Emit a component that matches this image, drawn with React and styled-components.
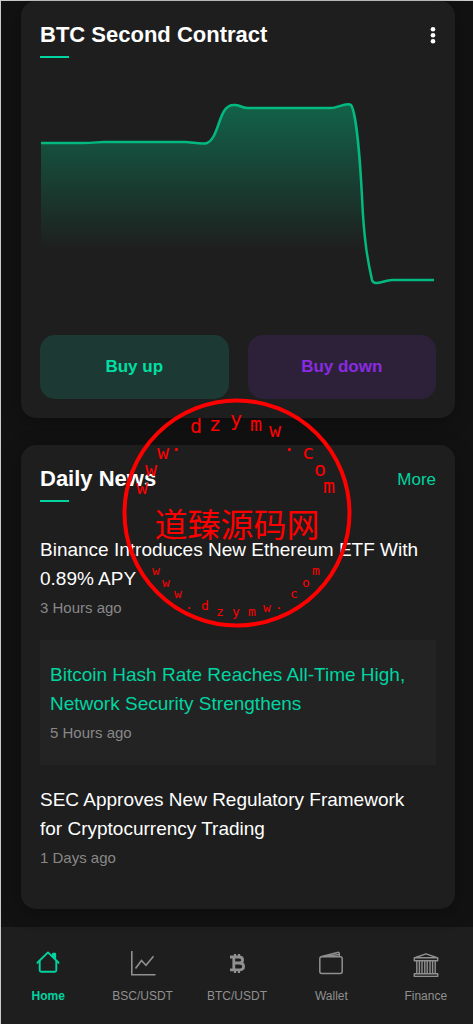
import React from "react";
import styled, { createGlobalStyle } from "styled-components";

const news = [
    { title: "Binance Introduces New Ethereum ETF With 0.89% APY", time: "3 Hours ago" },
    { title: "Bitcoin Hash Rate Reaches All-Time High, Network Security Strengthens", time: "5 Hours ago", active: true },
    { title: "SEC Approves New Regulatory Framework for Cryptocurrency Trading", time: "1 Days ago" },
];

const menu = [
    { label: "Home", icon: <HomeIcon />, active: true },
    { label: "BSC/USDT", icon: <GraphIcon /> },
    { label: "BTC/USDT", icon: <BitcoinIcon /> },
    { label: "Wallet", icon: <WalletIcon /> },
    { label: "Finance", icon: <BankIcon /> },
];

// [letter, x, y]
const topLetters = [
    ["w", 20, 96], ["w", 29, 78], ["w", 41, 61], [".", 54, 53], ["d", 74, 35], ["z", 93, 33], ["y", 114, 28],
    ["m", 134, 33], ["w", 153, 39], [".", 167, 53], ["c", 186, 61], ["o", 198, 78], ["m", 207, 95],
];
const bottomLetters = [
    ["w", 34, 177], ["w", 44, 189], ["w", 56, 200], [".", 67, 211], ["d", 83, 212], ["z", 98, 218], ["y", 114, 218],
    ["m", 130, 218], ["w", 145, 214], [".", 157, 211], ["c", 172, 200], ["o", 184, 189], ["m", 194, 177],
];

function DotsIcon() {
    return (
        <svg width="6" height="18" viewBox="0 0 6 18" fill="currentColor">
            <circle cx="3" cy="3.3" r="2.3" />
            <circle cx="3" cy="9.3" r="2.3" />
            <circle cx="3" cy="15.3" r="2.3" />
        </svg>
    );
}

function HomeIcon() {
    return (
        <svg viewBox="0 0 24 24" fill="none" stroke="currentColor" strokeWidth="1.9" strokeLinecap="round" strokeLinejoin="round">
            <path d="M1.4 11.8 L12 1.4 L22.6 11.8" />
            <path d="M3.7 10.5 V19.3 Q3.7 20.8 5.2 20.8 H18.8 Q20.3 20.8 20.3 19.3 V10.5" />
            <path d="M17 2.8 H19.2 V7.5 L17 5.5 Z" fill="currentColor" />
        </svg>
    );
}

function GraphIcon() {
    return (
        <svg viewBox="0 0 24 24" fill="none" stroke="currentColor" strokeWidth="1.6">
            <path d="M0.8 0 V24 M0 23.7 H24.5" />
            <path d="M4.5 17.5 L10.5 9.5 L15 14.2 L22.5 5.2" />
        </svg>
    );
}

function BitcoinIcon() {
    return (
        <svg viewBox="0 0 24 24" fill="none" stroke="currentColor" strokeWidth="2.8">
            <path d="M5 6 H14 Q17.6 6 17.6 8.9 Q17.6 12 14 12 H8 M14 12 Q18.6 12 18.6 15.4 Q18.6 18.8 14 18.8 H5 M8.8 6 V18.8" />
            <path d="M10 3 V6 M14 3 V6 M10 18.5 V22 M14 18.5 V22" strokeWidth="2.2" />
        </svg>
    );
}

function WalletIcon() {
    return (
        <svg viewBox="0 0 24 24" fill="none" stroke="currentColor" strokeWidth="1.5" strokeLinejoin="round">
            <rect x="0.8" y="5.8" width="22.4" height="16.7" rx="2" />
            <path d="M1.8 5.8 L18.5 1.4 Q20.3 1 20.3 2.8 V5.8" />
            <path d="M5 5.6 L20 3.4" />
        </svg>
    );
}

function BankIcon() {
    return (
        <svg viewBox="0 0 24 24" fill="none" stroke="currentColor" strokeWidth="1.4" strokeLinejoin="round">
            <path d="M1.5 6.5 L12 2.8 L22.5 6.5" />
            <rect x="0.3" y="6.8" width="23.4" height="3" />
            <path d="M2.8 9.8 V22.8 M5.4 9.8 V22.8 M8 9.8 V22.8 M10.8 9.8 V22.8 M13.2 9.8 V22.8 M16 9.8 V22.8 M18.6 9.8 V22.8 M21.2 9.8 V22.8" />
            <rect x="0.3" y="22.8" width="23.4" height="2.6" />
        </svg>
    );
}

function Chart() {
    const line = "M1 51 H42 C54 51 58 50 64 50 H145 C152 50 162 53 167 51 C180 45 178 14 193 13 C199 12 201 16 208 16 H291 C297 16 307 10 311 13 C316 20 320 66 322 105 C324 150 328 170 332 188 C334 195 344 188 352 188 H394";
    return (
        <ChartSvg viewBox="0 0 396 210" preserveAspectRatio="none" role="img" aria-label="BTC price">
            <defs>
                <linearGradient id="fade" gradientUnits="userSpaceOnUse" x1="0" y1="12" x2="0" y2="158">
                    <stop offset="0" stopColor="#03b97f" stopOpacity="0.44" />
                    <stop offset="1" stopColor="#03b97f" stopOpacity="0" />
                </linearGradient>
            </defs>
            <path d={line + " V210 H1 Z"} fill="url(#fade)" />
            <path d={line} fill="none" stroke="#03b97f" strokeWidth="2.5" />
        </ChartSvg>
    );
}

function Stamp() {
    return (
        <StampSvg viewBox="0 0 230 230" aria-hidden="true">
            <circle cx="115" cy="115" r="112.5" />
            {topLetters.map(([letter, x, y], i) => <text key={i} x={x} y={y} fontSize="20">{letter}</text>)}
            <text className="name" x="115" y="139" fontSize="33">道臻源码网</text>
            {bottomLetters.map(([letter, x, y], i) => <text key={i} x={x} y={y} fontSize="13">{letter}</text>)}
        </StampSvg>
    );
}

export default function App() {
    return (
        <Page>
            <GlobalStyle />
            <Content>
                <Card>
                    <CardHeader>
                        <Title>BTC Second Contract</Title>
                        <DotsButton aria-label="Options"><DotsIcon /></DotsButton>
                    </CardHeader>
                    <Chart />
                    <Actions>
                        <BuyButton $color="#00dfa3" $back="#1c3a33">Buy up</BuyButton>
                        <BuyButton $color="#8a2be2" $back="#2d2039">Buy down</BuyButton>
                    </Actions>
                </Card>
                <Card>
                    <CardHeader>
                        <Title>Daily News</Title>
                        <More href="#news">More</More>
                    </CardHeader>
                    <NewsList>
                        {news.map((item) => (
                            <NewsItem key={item.title} $active={item.active}>
                                <h3>{item.title}</h3>
                                <p>{item.time}</p>
                            </NewsItem>
                        ))}
                    </NewsList>
                </Card>
                <Stamp />
            </Content>
            <BottomNav>
                {menu.map((item) => (
                    <NavLink key={item.label} href="#" $active={item.active}>
                        {item.icon}
                        <span>{item.label}</span>
                    </NavLink>
                ))}
            </BottomNav>
        </Page>
    );
}

const GlobalStyle = createGlobalStyle`
    * {
        box-sizing: border-box;
    }
    body {
        margin: 0;
        background: #121212;
        font-family: "Liberation Sans", Arial, sans-serif;
    }
    h2, h3, p, ul {
        margin: 0;
        padding: 0;
    }
`;

const Page = styled.div`
    min-height: 100vh;
    display: flex;
    flex-direction: column;
    border-top: 1px solid #cccccc;
    border-left: 1px solid #cccccc;
    background: #121212;
    color: #ffffff;
`;

const Content = styled.main`
    position: relative;
    flex: 1;
    display: flex;
    flex-direction: column;
    gap: 27px;
    padding: 0 18px 18px 20px;
`;

const Card = styled.section`
    padding: 19px;
    border-radius: 15px;
    background: #1e1e1e;
    box-shadow: 0 4px 20px rgba(0, 0, 0, 0.3);
`;

const CardHeader = styled.header`
    display: flex;
    justify-content: space-between;
    align-items: flex-start;
`;

const Title = styled.h2`
    font-size: 22px;
    line-height: 30px;
    font-weight: 700;

    &::after {
        content: "";
        display: block;
        width: 29px;
        height: 2px;
        margin-top: 6px;
        background: #00d4a0;
    }
`;

const DotsButton = styled.button`
    display: flex;
    padding: 6px 0;
    border: 0;
    background: none;
    color: #ffffff;
`;

const ChartSvg = styled.svg`
    display: block;
    width: 100%;
    height: 210px;
    margin-top: 34px;
`;

const Actions = styled.div`
    display: grid;
    grid-template-columns: 1fr 1fr;
    gap: 19px;
    margin-top: 33px;
`;

const BuyButton = styled.button`
    height: 64px;
    border: 0;
    border-radius: 15px;
    background: ${(props) => props.$back};
    color: ${(props) => props.$color};
    font-family: inherit;
    font-size: 17px;
    font-weight: 700;
`;

const More = styled.a`
    color: #00d4a0;
    font-size: 17px;
    line-height: 32px;
    text-decoration: none;
`;

const NewsList = styled.ul`
    margin-top: 13px;
    list-style: none;
`;

const NewsItem = styled.li`
    padding: ${(props) => (props.$active ? "20px 10px 23px" : "20px 10px 23px 0")};
    background: ${(props) => (props.$active ? "#232323" : "transparent")};
    color: ${(props) => (props.$active ? "#00d4a0" : "#ffffff")};

    h3 {
        font-size: 19px;
        line-height: 29px;
        font-weight: 400;
    }
    p {
        margin-top: 6px;
        color: #888888;
        font-size: 15px;
        line-height: 18px;
    }
`;

const StampSvg = styled.svg`
    position: absolute;
    top: 397px;
    left: 50%;
    width: 230px;
    height: 230px;
    transform: translateX(-50%);
    pointer-events: none;

    circle {
        fill: none;
        stroke: #ff0000;
        stroke-width: 4px;
    }
    text {
        fill: #ff0000;
        font-family: "DejaVu Sans Mono", monospace;
        text-anchor: middle;
    }
    .name {
        font-family: "Noto Sans CJK SC", sans-serif;
    }
`;

const BottomNav = styled.nav`
    display: grid;
    grid-template-columns: repeat(5, 1fr);
    height: 97px;
    background: #1e1e1e;
`;

const NavLink = styled.a`
    display: flex;
    flex-direction: column;
    align-items: center;
    gap: 13px;
    padding-top: 24px;
    color: ${(props) => (props.$active ? "#00d4a0" : "#909090")};
    font-size: 12px;
    line-height: 16px;
    font-weight: ${(props) => (props.$active ? 700 : 400)};
    text-decoration: none;

    svg {
        width: 24px;
        height: 24px;
        overflow: visible;
    }
`;
